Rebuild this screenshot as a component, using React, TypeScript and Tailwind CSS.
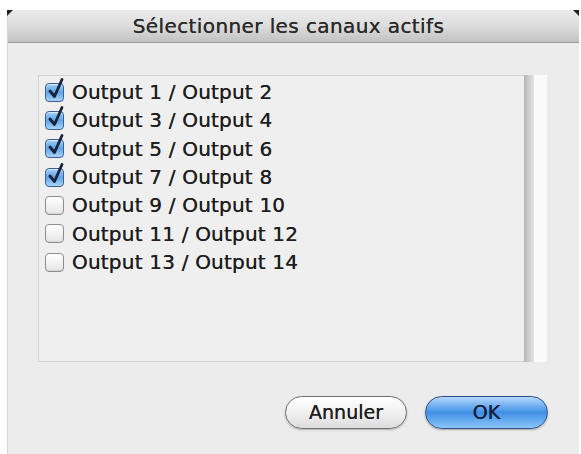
import { useState } from 'react';

const channels = [
  'Output 1 / Output 2',
  'Output 3 / Output 4',
  'Output 5 / Output 6',
  'Output 7 / Output 8',
  'Output 9 / Output 10',
  'Output 11 / Output 12',
  'Output 13 / Output 14',
];

function AquaCheck({ checked }: { checked: boolean }) {
  return (
    <span className="relative inline-block w-[19px] h-[19px] shrink-0">
      {checked ? (
        <span className="absolute inset-0 rounded-[4px] border border-[#3a5f8f] bg-gradient-to-b from-[#9fcdf5] via-[#5fa3e6] to-[#a8d6fb] shadow-[inset_0_1px_1px_rgba(255,255,255,0.7)]" />
      ) : (
        <span className="absolute inset-0 rounded-[4px] border border-[#8e8e8e] bg-gradient-to-b from-[#ffffff] to-[#e6e6e6] shadow-[inset_0_-1px_1px_rgba(0,0,0,0.08)]" />
      )}
      {checked && (
        <svg className="absolute left-[2px] top-[-5px]" width="19" height="22" viewBox="0 0 19 22">
          <path d="M3 13 L7.5 18.5 L15 1.5" fill="none" stroke="#16233a" strokeWidth="2.8" strokeLinecap="round" strokeLinejoin="round" />
        </svg>
      )}
    </span>
  );
}

export default function App() {
  const [checked, setChecked] = useState([true, true, true, true, false, false, false]);

  return (
    <div className="w-[581px] h-[454px] bg-white pl-[7px] pt-[10px] overflow-hidden" style={{ fontFamily: '"DejaVu Sans", "Liberation Sans", sans-serif' }}>
      <div className="relative w-[572px] h-[444px] flex flex-col bg-[#ececec] border-l border-[#d6d6d6]">
        {/* corner marks */}
        <span className="absolute left-[-1px] top-0 w-0 h-0 border-t-[6px] border-r-[6px] border-t-[#222] border-r-transparent" />
        <span className="absolute right-0 top-0 w-0 h-0 border-t-[6px] border-l-[6px] border-t-[#222] border-l-transparent" />

        <div className="h-[33px] flex items-center justify-center pr-[10px] bg-gradient-to-b from-[#ececec] via-[#dcdcdc] to-[#c2c2c2] border-b border-[#9a9a9a]">
          <span className="text-[20px] text-[#2a2a2a] tracking-[0.4px] [text-shadow:0_0_0.5px_#2a2a2a]">Sélectionner les canaux actifs</span>
        </div>

        <div className="flex-1 flex flex-col pl-[30px] pr-[31px] pt-[32px]">
          <div className="flex h-[287px]">
            <div className="w-[486px] border-t border-l border-b border-[#d2d2d2] bg-[#efefef] pl-[6px] pt-[2px] flex flex-col">
              {channels.map((c, i) => (
                <label
                  key={c}
                  className="h-[28.33px] flex items-center gap-[8px] cursor-default"
                  onClick={() => setChecked(checked.map((v, j) => (j === i ? !v : v)))}
                >
                  <AquaCheck checked={checked[i]} />
                  <span className="text-[20px] text-[#1e1e1e] leading-none tracking-[0.2px] [text-shadow:0_0_0.5px_#1e1e1e]">{c}</span>
                </label>
              ))}
            </div>
            <div className="w-[10px] bg-gradient-to-r from-[#b4b4b4] via-[#cfcfcf] to-[#e4e4e4]" />
            <div className="w-[13px] bg-[#fafafa]" />
          </div>

          <div className="flex justify-end gap-[18px] mt-[34px]">
            <button className="w-[122px] h-[33px] rounded-full border border-[#6f6f6f] bg-gradient-to-b from-[#ffffff] via-[#f1f1f1] to-[#dcdcdc] shadow-[0_1px_2px_rgba(0,0,0,0.25)] text-[19px] text-[#1e1e1e] [text-shadow:0_0_0.6px_#1e1e1e]">
              Annuler
            </button>
            <button className="w-[123px] h-[33px] rounded-full border border-[#2d4f86] bg-gradient-to-b from-[#b4d9fb] via-[#3f8fe6] to-[#8cc6fa] shadow-[0_1px_2px_rgba(0,0,0,0.3)] text-[19px] text-[#10203a] [text-shadow:0_0_0.6px_#10203a]">
              OK
            </button>
          </div>
        </div>
      </div>
    </div>
  );
}
